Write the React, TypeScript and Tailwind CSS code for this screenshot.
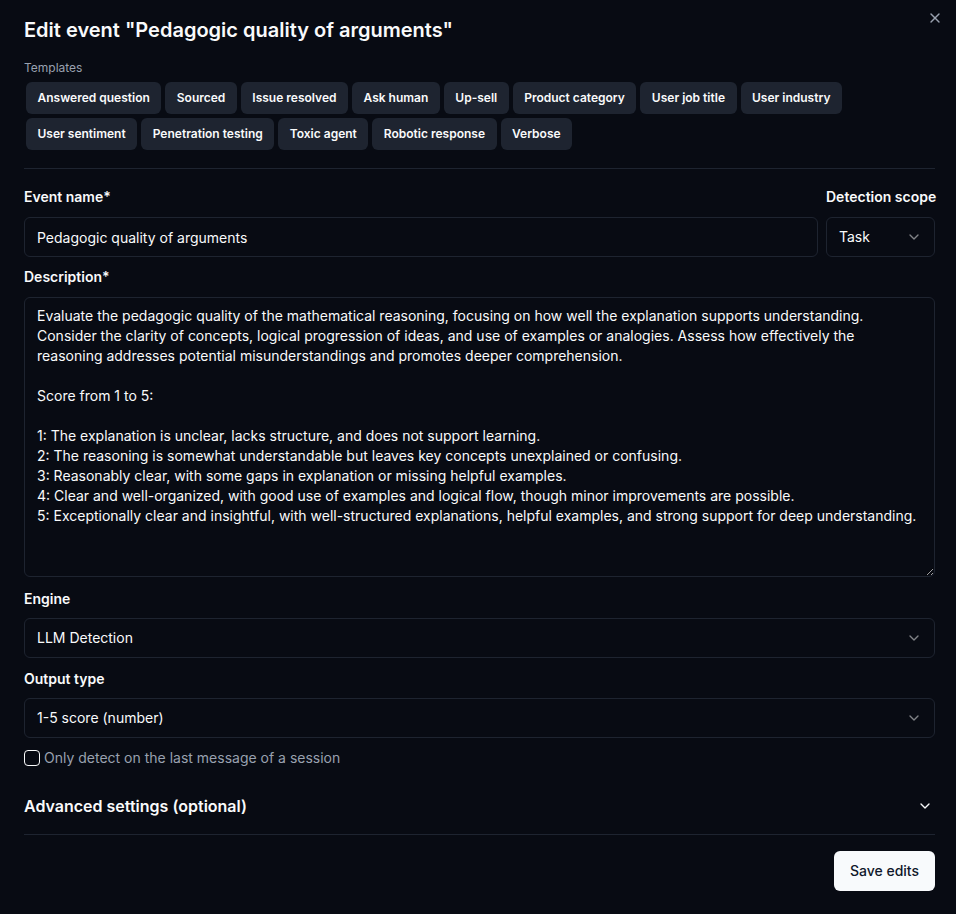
import { ChevronDown, X } from 'lucide-react'

const templates = [
  'Answered question',
  'Sourced',
  'Issue resolved',
  'Ask human',
  'Up-sell',
  'Product category',
  'User job title',
  'User industry',
  'User sentiment',
  'Penetration testing',
  'Toxic agent',
  'Robotic response',
  'Verbose',
]

const description = `Evaluate the pedagogic quality of the mathematical reasoning, focusing on how well the explanation supports understanding. Consider the clarity of concepts, logical progression of ideas, and use of examples or analogies. Assess how effectively the reasoning addresses potential misunderstandings and promotes deeper comprehension.

Score from 1 to 5:

1: The explanation is unclear, lacks structure, and does not support learning.
2: The reasoning is somewhat understandable but leaves key concepts unexplained or confusing.
3: Reasonably clear, with some gaps in explanation or missing helpful examples.
4: Clear and well-organized, with good use of examples and logical flow, though minor improvements are possible.
5: Exceptionally clear and insightful, with well-structured explanations, helpful examples, and strong support for deep understanding.`

const SelectBox = ({ value, className }: { value: string; className?: string }) => (
  <button
    type="button"
    className={`flex h-10 items-center justify-between rounded-md border border-[#1e2430] bg-transparent px-3 text-sm text-gray-50 ${className ?? ''}`}
  >
    <span>{value}</span>
    <ChevronDown className="h-4 w-4 opacity-50" strokeWidth={2} />
  </button>
)

const App = () => {
  return (
    <div
      className="relative min-h-[914px] w-full bg-[#080b13] pl-6 pr-[21px] pt-4 text-gray-50"
      style={{ fontFamily: 'Inter, "Noto Sans", sans-serif' }}
    >
      <button type="button" className="absolute right-[13px] top-[10px] text-gray-400">
        <X className="h-4 w-4" strokeWidth={2} />
      </button>

      <h2 className="text-xl font-semibold leading-7">
        Edit event "Pedagogic quality of arguments"
      </h2>

      <p className="mt-4 text-xs text-gray-400">Templates</p>
      <div className="mt-1 flex flex-wrap">
        {templates.map((template) => (
          <span
            key={template}
            className="m-0.5 inline-flex h-8 items-center rounded-md bg-[#1e2430] px-[11.5px] text-xs font-semibold text-gray-50"
          >
            {template}
          </span>
        ))}
      </div>

      <div className="mt-4 border-t border-[#1e2430]" />

      <div className="mt-[18px] flex gap-2">
        <div className="flex-1">
          <p className="text-sm font-semibold leading-5">Event name*</p>
          <input
            defaultValue="Pedagogic quality of arguments"
            className="mt-2.5 h-10 w-full rounded-md border border-[#1e2430] bg-transparent px-3 text-sm text-gray-50 outline-none"
          />
        </div>
        <div className="w-[109px]">
          <p className="whitespace-nowrap text-sm font-semibold leading-5">Detection scope</p>
          <SelectBox value="Task" className="mt-2.5 w-full" />
        </div>
      </div>

      <p className="mt-2.5 text-sm font-semibold leading-5">Description*</p>
      <textarea
        defaultValue={description}
        className="mt-2.5 block h-[280px] w-full rounded-md border border-[#1e2430] bg-transparent px-3 py-2 text-sm leading-5 text-gray-50 outline-none"
      />

      <p className="mt-3 text-sm font-semibold leading-5">Engine</p>
      <SelectBox value="LLM Detection" className="mt-[9px] w-full" />

      <p className="mt-[11px] text-sm font-semibold leading-5">Output type</p>
      <SelectBox value="1-5 score (number)" className="mt-[9px] w-full" />

      <label className="mt-2.5 flex items-center gap-1 text-sm text-gray-400">
        <span className="h-4 w-4 rounded-[4px] border border-gray-50" />
        Only detect on the last message of a session
      </label>

      <div className="mt-[26px] flex items-center justify-between border-b border-[#1e2430] pb-4">
        <p className="text-base font-semibold leading-6">Advanced settings (optional)</p>
        <ChevronDown className="mr-0.5 h-4 w-4" strokeWidth={2} />
      </div>

      <div className="mt-4 flex justify-end">
        <button
          type="button"
          className="h-10 rounded-md bg-[#f8fafc] px-4 text-sm font-medium text-[#0f172a]"
        >
          Save edits
        </button>
      </div>
    </div>
  )
}

export default App
